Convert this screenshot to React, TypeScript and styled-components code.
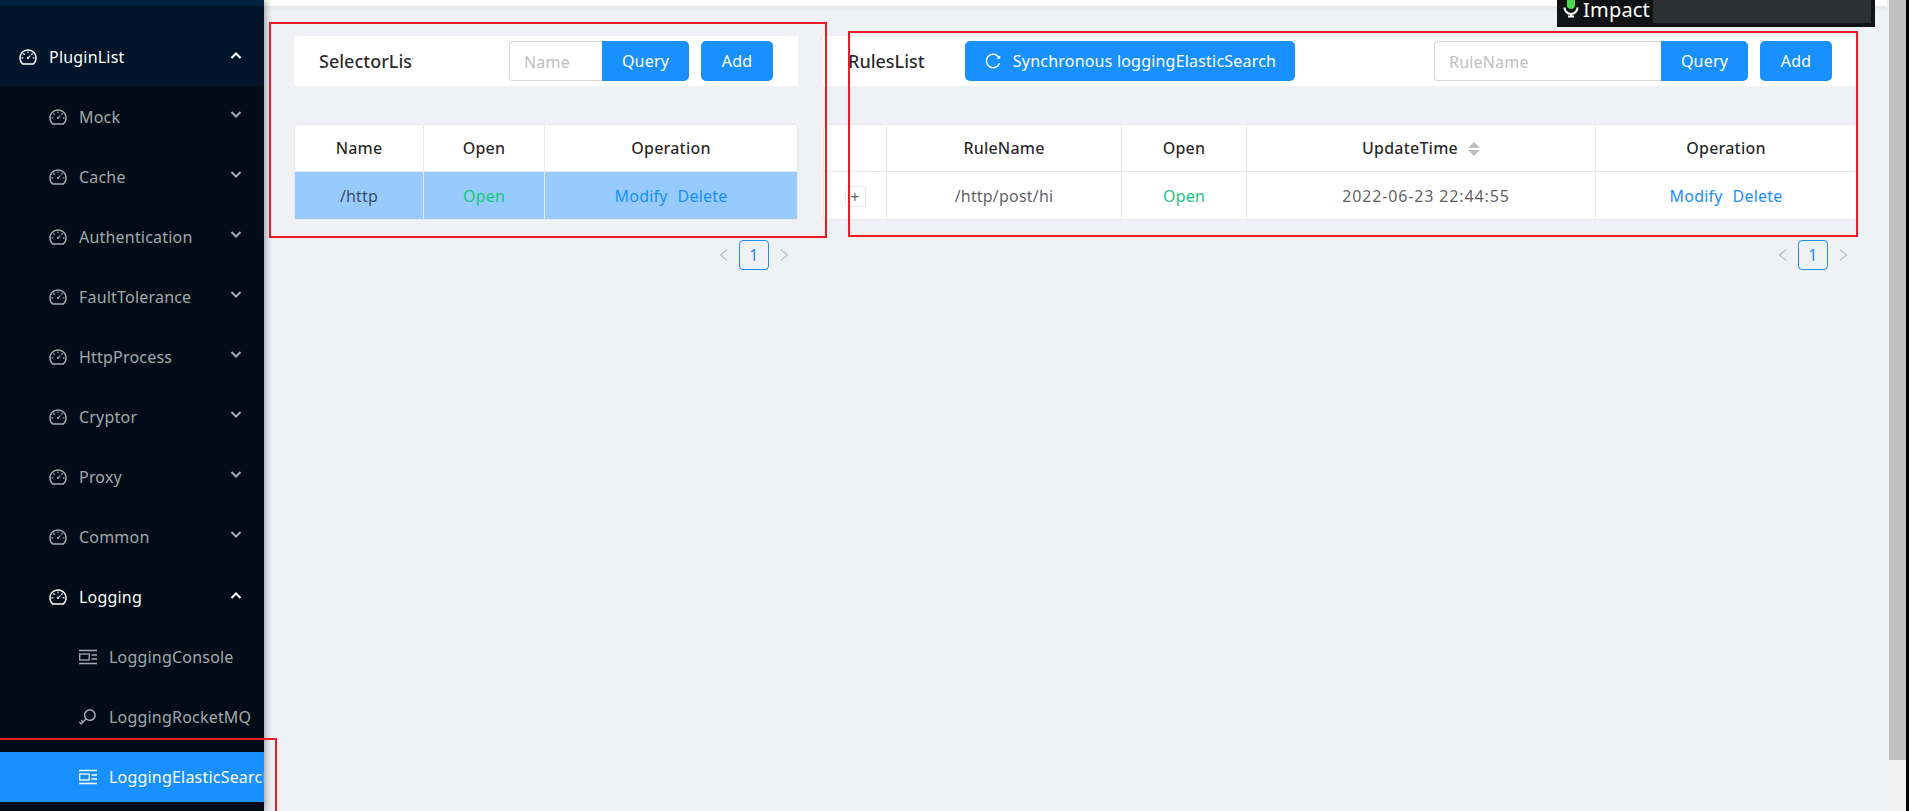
import styled, { createGlobalStyle } from 'styled-components';
import {
  AiOutlineDashboard,
  AiOutlineKey,
  AiOutlineLeft,
  AiOutlineReload,
  AiOutlineRight,
} from 'react-icons/ai';

const GlobalStyle = createGlobalStyle`
  html, body {
    margin: 0;
    height: 100%;
    overflow: hidden;
    background: #f0f1f5;
  }
  body, input, button {
    font-family: "Noto Sans", "Open Sans", sans-serif;
    font-size: 16px;
    letter-spacing: 0.2px;
  }
`;

const Page = styled.div`
  position: relative;
  display: flex;
  width: 1909px;
  height: 811px;
  overflow: hidden;
`;

const Sidebar = styled.aside`
  flex: 0 0 264px;
  display: flex;
  flex-direction: column;
  width: 264px;
  height: 811px;
  background: #000c17;
  box-shadow: 2px 0 6px rgba(0, 21, 41, 0.35);
  border-top: 6px solid #002140;
  box-sizing: border-box;
  overflow: hidden;
  position: relative;
  z-index: 2;
`;

const RootItem = styled.div`
  flex: none;
  display: flex;
  align-items: center;
  height: 58px;
  padding: 22px 0 0 19px;
  margin-bottom: 1px;
  background: #001529;
  color: #fff;
`;

const MenuItem = styled.div<{ $level: number; $open?: boolean }>`
  flex: none;
  display: flex;
  align-items: center;
  height: 50px;
  margin: 5px 0;
  padding-left: ${(p) => (p.$level === 1 ? 49 : 79)}px;
  color: ${(p) => (p.$open ? '#fff' : 'rgba(255, 255, 255, 0.65)')};
`;

const SubItem = styled(MenuItem)<{ $active?: boolean }>`
  white-space: nowrap;
  background: ${(p) => (p.$active ? '#1890ff' : 'transparent')};
  color: ${(p) => (p.$active ? '#fff' : 'rgba(255, 255, 255, 0.65)')};
`;

const ItemIcon = styled.span`
  display: inline-flex;
  align-items: center;
  justify-content: center;
  width: 18px;
  height: 18px;
  margin-right: 12px;
  font-size: 20px;
  flex: none;
  svg {
    flex: none;
  }
`;

const Chevron = styled.svg`
  position: absolute;
  left: 230px;
  width: 12px;
  height: 8px;
  flex: none;
  margin-top: -4px;
`;

const Main = styled.main`
  flex: 1;
  min-width: 0;
  display: flex;
  flex-direction: column;
`;

const TopBar = styled.div`
  flex: none;
  height: 6px;
  margin-right: 2px;
  background: #fff;
  box-shadow: 0 1px 4px rgba(0, 21, 41, 0.08);
`;

const Content = styled.div`
  display: grid;
  grid-template-columns: 504px 1034px;
  column-gap: 25px;
  padding: 30px 0 0 30px;
`;

const Panel = styled.section`
  display: flex;
  flex-direction: column;
`;

const PanelHeader = styled.div`
  display: flex;
  align-items: center;
  height: 50px;
  padding: 0 25px;
  background: #fff;
`;

const Title = styled.div<{ $width: number }>`
  flex: none;
  width: ${(p) => p.$width}px;
  overflow: hidden;
  white-space: nowrap;
  font-size: 18px;
  font-weight: 500;
  letter-spacing: 0;
  color: rgba(0, 0, 0, 0.85);
`;

const SearchGroup = styled.div`
  display: flex;
  margin-left: auto;
`;

const SearchInput = styled.input<{ $width: number }>`
  box-sizing: border-box;
  width: ${(p) => p.$width}px;
  height: 40px;
  padding: 2px 14px 0;
  border: 1px solid #d9d9d9;
  border-right: 0;
  border-radius: 4px 0 0 4px;
  outline: none;
  background: #fff;
  &::placeholder {
    color: #bfbfbf;
  }
`;

const PrimaryButton = styled.button<{ $width?: number }>`
  display: inline-flex;
  align-items: center;
  justify-content: center;
  gap: 11px;
  box-sizing: border-box;
  width: ${(p) => (p.$width ? `${p.$width}px` : 'auto')};
  height: 40px;
  padding: 0;
  border: 0;
  border-radius: 5px;
  background: #1890ff;
  color: #fff;
  white-space: nowrap;
`;

const QueryButton = styled(PrimaryButton)`
  border-radius: 0 5px 5px 0;
`;

const AddButton = styled(PrimaryButton)`
  margin-left: 12px;
`;

const TableBox = styled.table`
  width: 100%;
  margin-top: 38px;
  border-collapse: separate;
  border-spacing: 0;
  table-layout: fixed;
  background: #fff;
  border-radius: 4px 4px 0 0;
`;

const HeadCell = styled.th`
  box-sizing: border-box;
  height: 48px;
  padding: 0;
  font-weight: 500;
  color: rgba(0, 0, 0, 0.85);
  text-align: center;
  border-top: 1px solid #e8e8e8;
  border-right: 1px solid #e8e8e8;
  border-bottom: 1px solid #e8e8e8;
  &:first-child {
    border-left: 1px solid #e8e8e8;
    border-top-left-radius: 4px;
  }
  &:last-child {
    border-top-right-radius: 4px;
  }
`;

const BodyRow = styled.tr<{ $selected?: boolean }>`
  background: ${(p) => (p.$selected ? '#97cbff' : '#fff')};
`;

const BodyCell = styled.td`
  box-sizing: border-box;
  height: 48px;
  padding: 0;
  color: rgba(0, 0, 0, 0.65);
  text-align: center;
  border-right: 1px solid #e8e8e8;
  border-bottom: 1px solid #e8e8e8;
  &:first-child {
    border-left: 1px solid #e8e8e8;
  }
`;

const OpenText = styled.span`
  color: #18c77b;
`;

const DateText = styled.span`
  margin-left: 10px;
  letter-spacing: 0.85px;
`;

const ActionLink = styled.a`
  color: #1890ff;
  & + & {
    margin-left: 10px;
  }
`;

const ExpandButton = styled.span`
  display: inline-flex;
  align-items: center;
  justify-content: center;
  box-sizing: border-box;
  width: 21px;
  height: 21px;
  border: 1px solid #e8e8e8;
  border-radius: 2px;
  background: #fff;
  font-size: 16px;
  line-height: 1;
  vertical-align: middle;
`;

const SortCaret = styled.svg`
  width: 12px;
  height: 16px;
  margin-left: 10px;
  vertical-align: -3px;
`;

const Pager = styled.div`
  display: flex;
  justify-content: flex-end;
  align-items: center;
  margin-top: 20px;
  padding-right: 6px;
  gap: 7px;
  color: #bfbfbf;
  font-size: 18px;
`;

const PageArrow = styled.span`
  display: inline-flex;
  justify-content: center;
  width: 16px;
`;

const PageNumber = styled.span`
  display: flex;
  align-items: center;
  justify-content: center;
  box-sizing: border-box;
  width: 30px;
  height: 30px;
  border: 1px solid #1890ff;
  border-radius: 4px;
  color: #1890ff;
  background: transparent;
  font-size: 16px;
`;

const FakeScrollbar = styled.div`
  flex: none;
  width: 17px;
  margin-right: 3px;
  background: #f1f1f1;
`;

const ScrollThumb = styled.div`
  height: 760px;
  background: #c1c1c1;
`;

const BlackEdge = styled.div`
  position: absolute;
  top: 0;
  right: 0;
  bottom: 0;
  width: 3px;
  background: #000;
`;

const RedBox = styled.div<{ $x: number; $y: number; $w: number; $h: number }>`
  position: absolute;
  box-sizing: border-box;
  left: ${(p) => p.$x}px;
  top: ${(p) => p.$y}px;
  width: ${(p) => p.$w}px;
  height: ${(p) => p.$h}px;
  border: 2px solid #ed1c24;
  z-index: 5;
`;

const VoiceBar = styled.div`
  position: absolute;
  top: 0;
  left: 1557px;
  width: 318px;
  height: 27px;
  display: flex;
  background: #111214;
  z-index: 6;
`;

const VoiceLabel = styled.div`
  flex: none;
  display: flex;
  align-items: flex-start;
  width: 96px;
  padding-left: 6px;
  box-sizing: border-box;
  color: #fff;
  font-size: 20px;
  line-height: 20px;
`;

const VoiceFill = styled.div`
  width: 218px;
  height: 23px;
  background: #2c2f33;
`;

const ChevronIcon = ({ up }: { up?: boolean }) => (
  <Chevron viewBox="0 0 12 8" fill="none" stroke="currentColor" strokeWidth="2">
    <polyline points={up ? '1.5,7 6,2.5 10.5,7' : '1.5,1 6,5.5 10.5,1'} />
  </Chevron>
);

const ConsoleIcon = () => (
  <svg width="18" height="18" viewBox="0 0 18 18" fill="none" stroke="currentColor" strokeWidth="1.3">
    <path d="M0 2.5h18M0 15.5h18M12.5 7h5.5M12.5 11h5.5" />
    <rect x="0.7" y="6" width="9.5" height="6" />
  </svg>
);

const MicIcon = () => (
  <svg width="16" height="18" viewBox="0 0 16 18" style={{ flex: 'none', marginRight: 4 }}>
    <rect x="4" y="-6" width="8" height="15" rx="4" fill="#4cd94c" />
    <path d="M1.5 7.5a6.5 6.5 0 0 0 13 0M8 14v3M5 16.5h6" fill="none" stroke="#fff" strokeWidth="2.2" />
  </svg>
);

const groups = ['Mock', 'Cache', 'Authentication', 'FaultTolerance', 'HttpProcess', 'Cryptor', 'Proxy', 'Common'];

const Menu = () => (
  <Sidebar>
    <RootItem>
      <ItemIcon><AiOutlineDashboard /></ItemIcon>
      PluginList
      <ChevronIcon up />
    </RootItem>
    {groups.map((name) => (
      <MenuItem key={name} $level={1}>
        <ItemIcon><AiOutlineDashboard /></ItemIcon>
        {name}
        <ChevronIcon />
      </MenuItem>
    ))}
    <MenuItem $level={1} $open>
      <ItemIcon><AiOutlineDashboard /></ItemIcon>
      Logging
      <ChevronIcon up />
    </MenuItem>
    <SubItem $level={2}>
      <ItemIcon><ConsoleIcon /></ItemIcon>
      LoggingConsole
    </SubItem>
    <SubItem $level={2}>
      <ItemIcon><AiOutlineKey /></ItemIcon>
      LoggingRocketMQ
    </SubItem>
    <SubItem $level={2} $active>
      <ItemIcon><ConsoleIcon /></ItemIcon>
      LoggingElasticSearch
    </SubItem>
  </Sidebar>
);

const Pagination = () => (
  <Pager>
    <PageArrow><AiOutlineLeft /></PageArrow>
    <PageNumber>1</PageNumber>
    <PageArrow><AiOutlineRight /></PageArrow>
  </Pager>
);

const Actions = () => (
  <>
    <ActionLink>Modify</ActionLink>
    <ActionLink>Delete</ActionLink>
  </>
);

const App = () => (
  <Page>
    <GlobalStyle />
    <Menu />
    <Main>
      <TopBar />
      <Content>
        <Panel>
          <PanelHeader>
            <Title $width={94}>SelectorList</Title>
            <SearchGroup>
              <SearchInput $width={93} placeholder="Name" />
              <QueryButton $width={87}>Query</QueryButton>
            </SearchGroup>
            <AddButton $width={72}>Add</AddButton>
          </PanelHeader>
          <TableBox>
            <colgroup>
              <col width="130" />
              <col width="121" />
              <col />
            </colgroup>
            <thead>
              <tr>
                <HeadCell>Name</HeadCell>
                <HeadCell>Open</HeadCell>
                <HeadCell>Operation</HeadCell>
              </tr>
            </thead>
            <tbody>
              <BodyRow $selected>
                <BodyCell>/http</BodyCell>
                <BodyCell><OpenText>Open</OpenText></BodyCell>
                <BodyCell><Actions /></BodyCell>
              </BodyRow>
            </tbody>
          </TableBox>
          <Pagination />
        </Panel>
        <Panel>
          <PanelHeader>
            <Title $width={117}>RulesList</Title>
            <PrimaryButton $width={330}>
              <AiOutlineReload size={18} />
              Synchronous loggingElasticSearch
            </PrimaryButton>
            <SearchGroup>
              <SearchInput $width={227} placeholder="RuleName" />
              <QueryButton $width={87}>Query</QueryButton>
            </SearchGroup>
            <AddButton $width={72}>Add</AddButton>
          </PanelHeader>
          <TableBox>
            <colgroup>
              <col width="64" />
              <col width="235" />
              <col width="125" />
              <col width="349" />
              <col />
            </colgroup>
            <thead>
              <tr>
                <HeadCell />
                <HeadCell>RuleName</HeadCell>
                <HeadCell>Open</HeadCell>
                <HeadCell>
                  UpdateTime
                  <SortCaret viewBox="0 0 12 16">
                    <path d="M6 1l6 6H0zM6 15l6-6H0z" fill="#bfbfbf" />
                  </SortCaret>
                </HeadCell>
                <HeadCell>Operation</HeadCell>
              </tr>
            </thead>
            <tbody>
              <BodyRow>
                <BodyCell><ExpandButton>+</ExpandButton></BodyCell>
                <BodyCell>/http/post/hi</BodyCell>
                <BodyCell><OpenText>Open</OpenText></BodyCell>
                <BodyCell><DateText>2022-06-23 22:44:55</DateText></BodyCell>
                <BodyCell><Actions /></BodyCell>
              </BodyRow>
            </tbody>
          </TableBox>
          <Pagination />
        </Panel>
      </Content>
    </Main>
    <FakeScrollbar><ScrollThumb /></FakeScrollbar>
    <BlackEdge />
    <VoiceBar>
      <VoiceLabel><MicIcon />Impact</VoiceLabel>
      <VoiceFill />
    </VoiceBar>
    <RedBox $x={269} $y={22} $w={558} $h={216} />
    <RedBox $x={848} $y={31} $w={1010} $h={206} />
    <RedBox $x={-4} $y={738} $w={281} $h={90} />
  </Page>
);

export default App;
